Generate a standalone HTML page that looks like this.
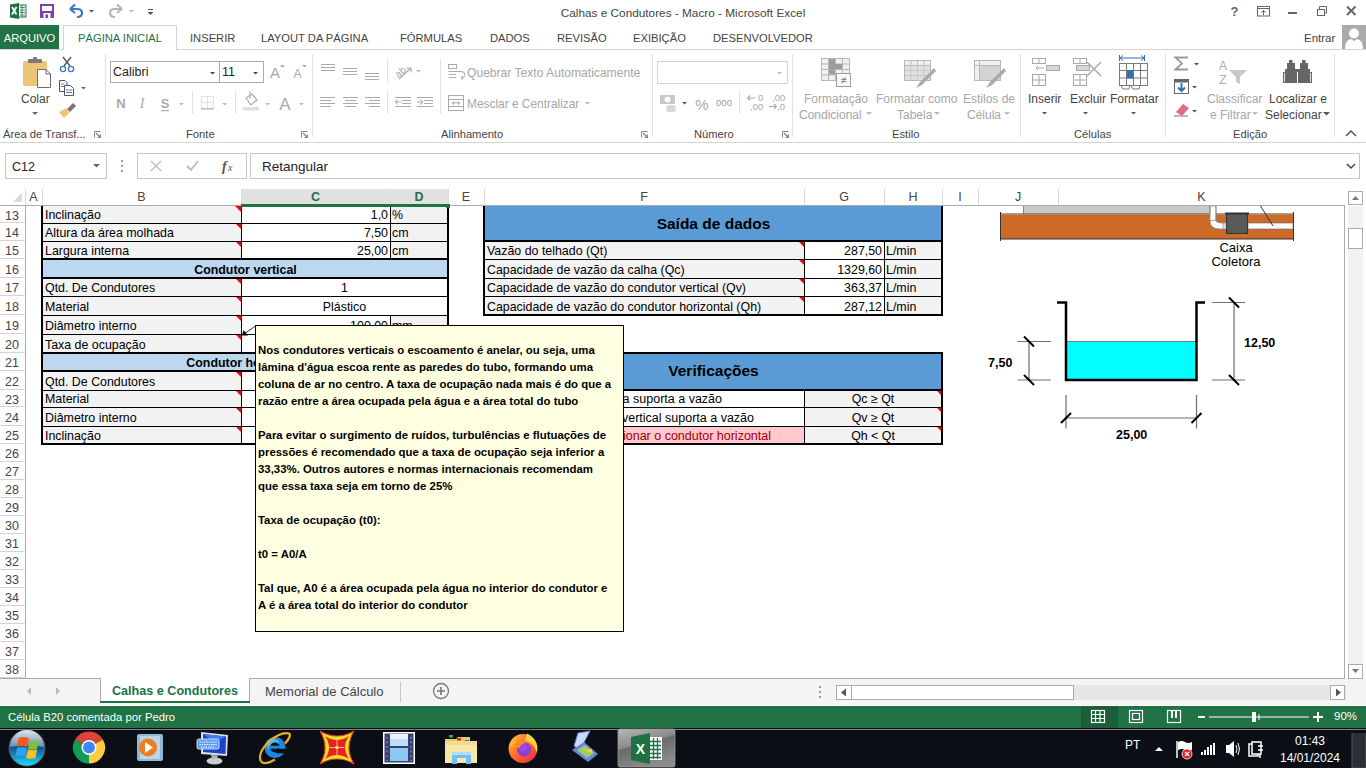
<!DOCTYPE html><html><head><meta charset="utf-8"><style>
*{margin:0;padding:0}
html,body{width:1366px;height:768px;overflow:hidden;background:#fff;font-family:"Liberation Sans",sans-serif;position:relative}
.a{position:absolute}
.t{white-space:nowrap}
</style></head><body>
<div class="a" style="left:0px;top:0px;width:1366px;height:25px;background:#fff"></div>
<div class="a t" style="left:0px;top:5px;width:1366px;text-align:center;font-size:11.8px;color:#444;line-height:16px">Calhas e Condutores - Macro - Microsoft Excel</div>
<div class="a" style="left:0px;top:25px;width:59px;height:25px;background:#217346"></div>
<div class="a t" style="left:0px;top:31px;width:59px;text-align:center;color:#fff;font-size:11.2px;line-height:15px">ARQUIVO</div>
<div class="a" style="left:63px;top:25px;width:112px;height:25px;border:1px solid #d4d4d4;border-bottom:none;background:#fff"></div>
<div class="a t" style="left:63px;top:31px;width:114px;text-align:center;color:#217346;font-size:11.2px;line-height:15px">PÁGINA INICIAL</div>
<div class="a t" style="left:190px;top:31px;color:#444;font-size:11.2px;line-height:15px">INSERIR</div>
<div class="a t" style="left:261px;top:31px;color:#444;font-size:11.2px;line-height:15px">LAYOUT DA PÁGINA</div>
<div class="a t" style="left:400px;top:31px;color:#444;font-size:11.2px;line-height:15px">FÓRMULAS</div>
<div class="a t" style="left:490px;top:31px;color:#444;font-size:11.2px;line-height:15px">DADOS</div>
<div class="a t" style="left:557px;top:31px;color:#444;font-size:11.2px;line-height:15px">REVISÃO</div>
<div class="a t" style="left:633px;top:31px;color:#444;font-size:11.2px;line-height:15px">EXIBIÇÃO</div>
<div class="a t" style="left:713px;top:31px;color:#444;font-size:11.2px;line-height:15px">DESENVOLVEDOR</div>
<div class="a t" style="left:1304px;top:31px;color:#444;font-size:11.5px;line-height:15px">Entrar</div>
<div class="a" style="left:0px;top:50px;width:1366px;height:92px;background:#fff;border-bottom:1px solid #d4d4d4"></div>
<div class="a" style="left:105px;top:54px;width:1px;height:83px;background:#e1e1e1"></div>
<div class="a" style="left:312px;top:54px;width:1px;height:83px;background:#e1e1e1"></div>
<div class="a" style="left:652px;top:54px;width:1px;height:83px;background:#e1e1e1"></div>
<div class="a" style="left:792px;top:54px;width:1px;height:83px;background:#e1e1e1"></div>
<div class="a" style="left:1020px;top:54px;width:1px;height:83px;background:#e1e1e1"></div>
<div class="a" style="left:1165px;top:54px;width:1px;height:83px;background:#e1e1e1"></div>
<div class="a" style="left:1334px;top:54px;width:1px;height:83px;background:#e1e1e1"></div>
<div class="a t" style="left:3px;top:127px;color:#444;font-size:11.2px;line-height:14px">Área de Transf...</div>
<div class="a t" style="left:186px;top:127px;color:#444;font-size:11.2px;line-height:14px">Fonte</div>
<div class="a t" style="left:441px;top:127px;color:#444;font-size:11.2px;line-height:14px">Alinhamento</div>
<div class="a t" style="left:694px;top:127px;color:#444;font-size:11.2px;line-height:14px">Número</div>
<div class="a t" style="left:892px;top:127px;color:#444;font-size:11.2px;line-height:14px">Estilo</div>
<div class="a t" style="left:1074px;top:127px;color:#444;font-size:11.2px;line-height:14px">Células</div>
<div class="a t" style="left:1233px;top:127px;color:#444;font-size:11.2px;line-height:14px">Edição</div>
<div class="a" style="left:0px;top:144px;width:1366px;height:45px;background:#fff"></div>
<div class="a" style="left:5px;top:153px;width:100px;height:24px;border:1px solid #c6c6c6;background:#fff"></div>
<div class="a t" style="left:12px;top:160px;color:#222;font-size:12.5px;line-height:14px">C12</div>
<div class="a" style="left:137px;top:153px;width:108px;height:24px;border:1px solid #c6c6c6;background:#fff"></div>
<div class="a" style="left:250px;top:153px;width:1108px;height:24px;border:1px solid #c6c6c6;background:#fff"></div>
<div class="a t" style="left:262px;top:160px;color:#222;font-size:13.5px;line-height:14px">Retangular</div>
<div class="a" style="left:0px;top:189px;width:1345px;height:17px;background:#fff;border-bottom:1px solid #ababab"></div>
<div class="a" style="left:0px;top:189px;width:25px;height:16px;background:#fff"></div>
<div class="a" style="left:25px;top:189px;width:17px;height:16px;background:#fff"></div>
<div class="a t" style="left:25px;top:190px;width:17px;text-align:center;color:#444;font-size:12.5px;line-height:15px">A</div>
<div class="a" style="left:42px;top:189px;width:199px;height:16px;background:#fff"></div>
<div class="a t" style="left:42px;top:190px;width:199px;text-align:center;color:#444;font-size:12.5px;line-height:15px">B</div>
<div class="a" style="left:241px;top:189px;width:149px;height:16px;background:#e1e1e1"></div>
<div class="a t" style="left:241px;top:190px;width:149px;text-align:center;color:#217346;font-weight:bold;font-size:12.5px;line-height:15px">C</div>
<div class="a" style="left:390px;top:189px;width:58px;height:16px;background:#e1e1e1"></div>
<div class="a t" style="left:390px;top:190px;width:58px;text-align:center;color:#217346;font-weight:bold;font-size:12.5px;line-height:15px">D</div>
<div class="a" style="left:448px;top:189px;width:36px;height:16px;background:#fff"></div>
<div class="a t" style="left:448px;top:190px;width:36px;text-align:center;color:#444;font-size:12.5px;line-height:15px">E</div>
<div class="a" style="left:484px;top:189px;width:320px;height:16px;background:#fff"></div>
<div class="a t" style="left:484px;top:190px;width:320px;text-align:center;color:#444;font-size:12.5px;line-height:15px">F</div>
<div class="a" style="left:804px;top:189px;width:80px;height:16px;background:#fff"></div>
<div class="a t" style="left:804px;top:190px;width:80px;text-align:center;color:#444;font-size:12.5px;line-height:15px">G</div>
<div class="a" style="left:884px;top:189px;width:58px;height:16px;background:#fff"></div>
<div class="a t" style="left:884px;top:190px;width:58px;text-align:center;color:#444;font-size:12.5px;line-height:15px">H</div>
<div class="a" style="left:942px;top:189px;width:36px;height:16px;background:#fff"></div>
<div class="a t" style="left:942px;top:190px;width:36px;text-align:center;color:#444;font-size:12.5px;line-height:15px">I</div>
<div class="a" style="left:978px;top:189px;width:80px;height:16px;background:#fff"></div>
<div class="a t" style="left:978px;top:190px;width:80px;text-align:center;color:#444;font-size:12.5px;line-height:15px">J</div>
<div class="a" style="left:1058px;top:189px;width:287px;height:16px;background:#fff"></div>
<div class="a t" style="left:1058px;top:190px;width:287px;text-align:center;color:#444;font-size:12.5px;line-height:15px">K</div>
<div class="a" style="left:25px;top:189px;width:1px;height:16px;background:#dadada"></div>
<div class="a" style="left:42px;top:189px;width:1px;height:16px;background:#dadada"></div>
<div class="a" style="left:241px;top:189px;width:1px;height:16px;background:#dadada"></div>
<div class="a" style="left:390px;top:189px;width:1px;height:16px;background:#dadada"></div>
<div class="a" style="left:448px;top:189px;width:1px;height:16px;background:#dadada"></div>
<div class="a" style="left:484px;top:189px;width:1px;height:16px;background:#dadada"></div>
<div class="a" style="left:804px;top:189px;width:1px;height:16px;background:#dadada"></div>
<div class="a" style="left:884px;top:189px;width:1px;height:16px;background:#dadada"></div>
<div class="a" style="left:942px;top:189px;width:1px;height:16px;background:#dadada"></div>
<div class="a" style="left:978px;top:189px;width:1px;height:16px;background:#dadada"></div>
<div class="a" style="left:1058px;top:189px;width:1px;height:16px;background:#dadada"></div>
<div class="a" style="left:0px;top:205px;width:1345px;height:1px;background:#ababab"></div>
<div class="a" style="left:0px;top:206px;width:1345px;height:472px;background:#fff"></div>
<div class="a" style="left:0px;top:206px;width:26px;height:17px;border-right:1px solid #ababab;border-bottom:1px solid #d4d4d4;box-sizing:border-box;background:#fff"></div>
<div class="a t" style="left:0px;top:208px;width:24px;text-align:center;color:#444;font-size:12.5px;line-height:16px">13</div>
<div class="a" style="left:0px;top:223px;width:26px;height:18px;border-right:1px solid #ababab;border-bottom:1px solid #d4d4d4;box-sizing:border-box;background:#fff"></div>
<div class="a t" style="left:0px;top:225px;width:24px;text-align:center;color:#444;font-size:12.5px;line-height:17px">14</div>
<div class="a" style="left:0px;top:241px;width:26px;height:18px;border-right:1px solid #ababab;border-bottom:1px solid #d4d4d4;box-sizing:border-box;background:#fff"></div>
<div class="a t" style="left:0px;top:243px;width:24px;text-align:center;color:#444;font-size:12.5px;line-height:17px">15</div>
<div class="a" style="left:0px;top:259px;width:26px;height:19px;border-right:1px solid #ababab;border-bottom:1px solid #d4d4d4;box-sizing:border-box;background:#fff"></div>
<div class="a t" style="left:0px;top:261px;width:24px;text-align:center;color:#444;font-size:12.5px;line-height:18px">16</div>
<div class="a" style="left:0px;top:278px;width:26px;height:18px;border-right:1px solid #ababab;border-bottom:1px solid #d4d4d4;box-sizing:border-box;background:#fff"></div>
<div class="a t" style="left:0px;top:280px;width:24px;text-align:center;color:#444;font-size:12.5px;line-height:17px">17</div>
<div class="a" style="left:0px;top:296px;width:26px;height:19px;border-right:1px solid #ababab;border-bottom:1px solid #d4d4d4;box-sizing:border-box;background:#fff"></div>
<div class="a t" style="left:0px;top:298px;width:24px;text-align:center;color:#444;font-size:12.5px;line-height:18px">18</div>
<div class="a" style="left:0px;top:315px;width:26px;height:19px;border-right:1px solid #ababab;border-bottom:1px solid #d4d4d4;box-sizing:border-box;background:#fff"></div>
<div class="a t" style="left:0px;top:317px;width:24px;text-align:center;color:#444;font-size:12.5px;line-height:18px">19</div>
<div class="a" style="left:0px;top:334px;width:26px;height:19px;border-right:1px solid #ababab;border-bottom:1px solid #d4d4d4;box-sizing:border-box;background:#fff"></div>
<div class="a t" style="left:0px;top:336px;width:24px;text-align:center;color:#444;font-size:12.5px;line-height:18px">20</div>
<div class="a" style="left:0px;top:353px;width:26px;height:18px;border-right:1px solid #ababab;border-bottom:1px solid #d4d4d4;box-sizing:border-box;background:#fff"></div>
<div class="a t" style="left:0px;top:355px;width:24px;text-align:center;color:#444;font-size:12.5px;line-height:17px">21</div>
<div class="a" style="left:0px;top:371px;width:26px;height:19px;border-right:1px solid #ababab;border-bottom:1px solid #d4d4d4;box-sizing:border-box;background:#fff"></div>
<div class="a t" style="left:0px;top:373px;width:24px;text-align:center;color:#444;font-size:12.5px;line-height:18px">22</div>
<div class="a" style="left:0px;top:390px;width:26px;height:17px;border-right:1px solid #ababab;border-bottom:1px solid #d4d4d4;box-sizing:border-box;background:#fff"></div>
<div class="a t" style="left:0px;top:392px;width:24px;text-align:center;color:#444;font-size:12.5px;line-height:16px">23</div>
<div class="a" style="left:0px;top:407px;width:26px;height:19px;border-right:1px solid #ababab;border-bottom:1px solid #d4d4d4;box-sizing:border-box;background:#fff"></div>
<div class="a t" style="left:0px;top:409px;width:24px;text-align:center;color:#444;font-size:12.5px;line-height:18px">24</div>
<div class="a" style="left:0px;top:426px;width:26px;height:18px;border-right:1px solid #ababab;border-bottom:1px solid #d4d4d4;box-sizing:border-box;background:#fff"></div>
<div class="a t" style="left:0px;top:428px;width:24px;text-align:center;color:#444;font-size:12.5px;line-height:17px">25</div>
<div class="a" style="left:0px;top:444px;width:26px;height:18px;border-right:1px solid #ababab;border-bottom:1px solid #d4d4d4;box-sizing:border-box;background:#fff"></div>
<div class="a t" style="left:0px;top:446px;width:24px;text-align:center;color:#444;font-size:12.5px;line-height:17px">26</div>
<div class="a" style="left:0px;top:462px;width:26px;height:18px;border-right:1px solid #ababab;border-bottom:1px solid #d4d4d4;box-sizing:border-box;background:#fff"></div>
<div class="a t" style="left:0px;top:464px;width:24px;text-align:center;color:#444;font-size:12.5px;line-height:17px">27</div>
<div class="a" style="left:0px;top:480px;width:26px;height:18px;border-right:1px solid #ababab;border-bottom:1px solid #d4d4d4;box-sizing:border-box;background:#fff"></div>
<div class="a t" style="left:0px;top:482px;width:24px;text-align:center;color:#444;font-size:12.5px;line-height:17px">28</div>
<div class="a" style="left:0px;top:498px;width:26px;height:18px;border-right:1px solid #ababab;border-bottom:1px solid #d4d4d4;box-sizing:border-box;background:#fff"></div>
<div class="a t" style="left:0px;top:500px;width:24px;text-align:center;color:#444;font-size:12.5px;line-height:17px">29</div>
<div class="a" style="left:0px;top:516px;width:26px;height:18px;border-right:1px solid #ababab;border-bottom:1px solid #d4d4d4;box-sizing:border-box;background:#fff"></div>
<div class="a t" style="left:0px;top:518px;width:24px;text-align:center;color:#444;font-size:12.5px;line-height:17px">30</div>
<div class="a" style="left:0px;top:534px;width:26px;height:18px;border-right:1px solid #ababab;border-bottom:1px solid #d4d4d4;box-sizing:border-box;background:#fff"></div>
<div class="a t" style="left:0px;top:536px;width:24px;text-align:center;color:#444;font-size:12.5px;line-height:17px">31</div>
<div class="a" style="left:0px;top:552px;width:26px;height:18px;border-right:1px solid #ababab;border-bottom:1px solid #d4d4d4;box-sizing:border-box;background:#fff"></div>
<div class="a t" style="left:0px;top:554px;width:24px;text-align:center;color:#444;font-size:12.5px;line-height:17px">32</div>
<div class="a" style="left:0px;top:570px;width:26px;height:18px;border-right:1px solid #ababab;border-bottom:1px solid #d4d4d4;box-sizing:border-box;background:#fff"></div>
<div class="a t" style="left:0px;top:572px;width:24px;text-align:center;color:#444;font-size:12.5px;line-height:17px">33</div>
<div class="a" style="left:0px;top:588px;width:26px;height:18px;border-right:1px solid #ababab;border-bottom:1px solid #d4d4d4;box-sizing:border-box;background:#fff"></div>
<div class="a t" style="left:0px;top:590px;width:24px;text-align:center;color:#444;font-size:12.5px;line-height:17px">34</div>
<div class="a" style="left:0px;top:606px;width:26px;height:18px;border-right:1px solid #ababab;border-bottom:1px solid #d4d4d4;box-sizing:border-box;background:#fff"></div>
<div class="a t" style="left:0px;top:608px;width:24px;text-align:center;color:#444;font-size:12.5px;line-height:17px">35</div>
<div class="a" style="left:0px;top:624px;width:26px;height:18px;border-right:1px solid #ababab;border-bottom:1px solid #d4d4d4;box-sizing:border-box;background:#fff"></div>
<div class="a t" style="left:0px;top:626px;width:24px;text-align:center;color:#444;font-size:12.5px;line-height:17px">36</div>
<div class="a" style="left:0px;top:642px;width:26px;height:18px;border-right:1px solid #ababab;border-bottom:1px solid #d4d4d4;box-sizing:border-box;background:#fff"></div>
<div class="a t" style="left:0px;top:644px;width:24px;text-align:center;color:#444;font-size:12.5px;line-height:17px">37</div>
<div class="a" style="left:0px;top:660px;width:26px;height:18px;border-right:1px solid #ababab;border-bottom:1px solid #d4d4d4;box-sizing:border-box;background:#fff"></div>
<div class="a t" style="left:0px;top:662px;width:24px;text-align:center;color:#444;font-size:12.5px;line-height:17px">38</div>
<div class="a" style="left:1344px;top:205px;width:1px;height:474px;background:#ababab"></div>
<div class="a" style="left:43px;top:206px;width:198px;height:17px;background:#f2f2f2"></div>
<div class="a" style="left:43px;top:223px;width:198px;height:18px;background:#f2f2f2"></div>
<div class="a" style="left:43px;top:241px;width:198px;height:18px;background:#f2f2f2"></div>
<div class="a" style="left:43px;top:278px;width:198px;height:18px;background:#f2f2f2"></div>
<div class="a" style="left:43px;top:296px;width:198px;height:19px;background:#f2f2f2"></div>
<div class="a" style="left:43px;top:315px;width:198px;height:19px;background:#f2f2f2"></div>
<div class="a" style="left:43px;top:334px;width:198px;height:19px;background:#f2f2f2"></div>
<div class="a" style="left:43px;top:371px;width:198px;height:19px;background:#f2f2f2"></div>
<div class="a" style="left:43px;top:390px;width:198px;height:17px;background:#f2f2f2"></div>
<div class="a" style="left:43px;top:407px;width:198px;height:19px;background:#f2f2f2"></div>
<div class="a" style="left:43px;top:426px;width:198px;height:18px;background:#f2f2f2"></div>
<div class="a" style="left:241px;top:206px;width:149px;height:17px;background:#fff"></div>
<div class="a" style="left:390px;top:206px;width:58px;height:17px;background:#f2f2f2"></div>
<div class="a" style="left:241px;top:223px;width:149px;height:18px;background:#fff"></div>
<div class="a" style="left:390px;top:223px;width:58px;height:18px;background:#f2f2f2"></div>
<div class="a" style="left:241px;top:241px;width:149px;height:18px;background:#fff"></div>
<div class="a" style="left:390px;top:241px;width:58px;height:18px;background:#f2f2f2"></div>
<div class="a" style="left:241px;top:315px;width:149px;height:19px;background:#fff"></div>
<div class="a" style="left:390px;top:315px;width:58px;height:19px;background:#f2f2f2"></div>
<div class="a" style="left:241px;top:334px;width:149px;height:19px;background:#fff"></div>
<div class="a" style="left:390px;top:334px;width:58px;height:19px;background:#f2f2f2"></div>
<div class="a" style="left:241px;top:278px;width:207px;height:18px;background:#fff"></div>
<div class="a" style="left:241px;top:296px;width:207px;height:19px;background:#fff"></div>
<div class="a" style="left:241px;top:371px;width:207px;height:19px;background:#fff"></div>
<div class="a" style="left:241px;top:390px;width:207px;height:17px;background:#fff"></div>
<div class="a" style="left:241px;top:407px;width:149px;height:19px;background:#fff"></div>
<div class="a" style="left:390px;top:407px;width:58px;height:19px;background:#f2f2f2"></div>
<div class="a" style="left:241px;top:426px;width:149px;height:18px;background:#fff"></div>
<div class="a" style="left:390px;top:426px;width:58px;height:18px;background:#f2f2f2"></div>
<div class="a" style="left:43px;top:259px;width:405px;height:19px;background:#bdd7ee"></div>
<div class="a" style="left:43px;top:353px;width:405px;height:18px;background:#bdd7ee"></div>
<div class="a t" style="left:45px;top:208px;font-size:12.4px;line-height:14px;color:#000;">Inclinação</div>
<div class="a" style="left:235px;top:206px;width:0;height:0;border-left:6px solid transparent;border-top:6px solid #f00"></div>
<div class="a t" style="left:45px;top:226px;font-size:12.4px;line-height:14px;color:#000;">Altura da área molhada</div>
<div class="a" style="left:235px;top:223px;width:0;height:0;border-left:6px solid transparent;border-top:6px solid #f00"></div>
<div class="a t" style="left:45px;top:244px;font-size:12.4px;line-height:14px;color:#000;">Largura interna</div>
<div class="a" style="left:235px;top:241px;width:0;height:0;border-left:6px solid transparent;border-top:6px solid #f00"></div>
<div class="a t" style="left:45px;top:281px;font-size:12.4px;line-height:14px;color:#000;">Qtd. De Condutores</div>
<div class="a" style="left:235px;top:278px;width:0;height:0;border-left:6px solid transparent;border-top:6px solid #f00"></div>
<div class="a t" style="left:45px;top:300px;font-size:12.4px;line-height:14px;color:#000;">Material</div>
<div class="a" style="left:235px;top:296px;width:0;height:0;border-left:6px solid transparent;border-top:6px solid #f00"></div>
<div class="a t" style="left:45px;top:319px;font-size:12.4px;line-height:14px;color:#000;">Diâmetro interno</div>
<div class="a" style="left:235px;top:315px;width:0;height:0;border-left:6px solid transparent;border-top:6px solid #f00"></div>
<div class="a t" style="left:45px;top:338px;font-size:12.4px;line-height:14px;color:#000;">Taxa de ocupação</div>
<div class="a" style="left:235px;top:334px;width:0;height:0;border-left:6px solid transparent;border-top:6px solid #f00"></div>
<div class="a t" style="left:45px;top:375px;font-size:12.4px;line-height:14px;color:#000;">Qtd. De Condutores</div>
<div class="a" style="left:235px;top:371px;width:0;height:0;border-left:6px solid transparent;border-top:6px solid #f00"></div>
<div class="a t" style="left:45px;top:392px;font-size:12.4px;line-height:14px;color:#000;">Material</div>
<div class="a" style="left:235px;top:390px;width:0;height:0;border-left:6px solid transparent;border-top:6px solid #f00"></div>
<div class="a t" style="left:45px;top:411px;font-size:12.4px;line-height:14px;color:#000;">Diâmetro interno</div>
<div class="a" style="left:235px;top:407px;width:0;height:0;border-left:6px solid transparent;border-top:6px solid #f00"></div>
<div class="a t" style="left:45px;top:429px;font-size:12.4px;line-height:14px;color:#000;">Inclinação</div>
<div class="a" style="left:235px;top:426px;width:0;height:0;border-left:6px solid transparent;border-top:6px solid #f00"></div>
<div class="a t" style="left:241px;top:208px;width:147px;text-align:right;font-size:12.4px;line-height:14px;color:#000;">1,0</div>
<div class="a t" style="left:392px;top:208px;font-size:12.4px;line-height:14px;color:#000;">%</div>
<div class="a t" style="left:241px;top:226px;width:147px;text-align:right;font-size:12.4px;line-height:14px;color:#000;">7,50</div>
<div class="a t" style="left:392px;top:226px;font-size:12.4px;line-height:14px;color:#000;">cm</div>
<div class="a t" style="left:241px;top:244px;width:147px;text-align:right;font-size:12.4px;line-height:14px;color:#000;">25,00</div>
<div class="a t" style="left:392px;top:244px;font-size:12.4px;line-height:14px;color:#000;">cm</div>
<div class="a t" style="left:241px;top:281px;width:207px;text-align:center;font-size:12.4px;line-height:14px;color:#000;">1</div>
<div class="a t" style="left:241px;top:300px;width:207px;text-align:center;font-size:12.4px;line-height:14px;color:#000;">Plástico</div>
<div class="a t" style="left:241px;top:319px;width:147px;text-align:right;font-size:12.4px;line-height:14px;color:#000;">100,00</div>
<div class="a t" style="left:392px;top:319px;font-size:12.4px;line-height:14px;color:#000;">mm</div>
<div class="a t" style="left:43px;top:263px;width:405px;text-align:center;font-size:12.4px;line-height:14px;color:#000;font-weight:bold">Condutor vertical</div>
<div class="a t" style="left:43px;top:356px;width:405px;text-align:center;font-size:12.4px;line-height:14px;color:#000;font-weight:bold">Condutor horizontal</div>
<div class="a" style="left:43px;top:223px;width:405px;height:1px;background:#000"></div>
<div class="a" style="left:43px;top:241px;width:405px;height:1px;background:#000"></div>
<div class="a" style="left:43px;top:259px;width:405px;height:1px;background:#000"></div>
<div class="a" style="left:43px;top:278px;width:405px;height:1px;background:#000"></div>
<div class="a" style="left:43px;top:296px;width:405px;height:1px;background:#000"></div>
<div class="a" style="left:43px;top:315px;width:405px;height:1px;background:#000"></div>
<div class="a" style="left:43px;top:334px;width:405px;height:1px;background:#000"></div>
<div class="a" style="left:43px;top:353px;width:405px;height:1px;background:#000"></div>
<div class="a" style="left:43px;top:371px;width:405px;height:1px;background:#000"></div>
<div class="a" style="left:43px;top:390px;width:405px;height:1px;background:#000"></div>
<div class="a" style="left:43px;top:407px;width:405px;height:1px;background:#000"></div>
<div class="a" style="left:43px;top:426px;width:405px;height:1px;background:#000"></div>
<div class="a" style="left:41px;top:258px;width:408px;height:2px;background:#000"></div>
<div class="a" style="left:41px;top:277px;width:408px;height:2px;background:#000"></div>
<div class="a" style="left:41px;top:352px;width:408px;height:2px;background:#000"></div>
<div class="a" style="left:41px;top:370px;width:408px;height:2px;background:#000"></div>
<div class="a" style="left:41px;top:443px;width:408px;height:2px;background:#000"></div>
<div class="a" style="left:41px;top:206px;width:2px;height:238px;background:#000"></div>
<div class="a" style="left:447px;top:206px;width:2px;height:238px;background:#000"></div>
<div class="a" style="left:241px;top:206px;width:1px;height:53px;background:#000"></div>
<div class="a" style="left:241px;top:278px;width:1px;height:75px;background:#000"></div>
<div class="a" style="left:241px;top:371px;width:1px;height:73px;background:#000"></div>
<div class="a" style="left:390px;top:206px;width:1px;height:53px;background:#000"></div>
<div class="a" style="left:390px;top:315px;width:1px;height:38px;background:#000"></div>
<div class="a" style="left:390px;top:407px;width:1px;height:37px;background:#000"></div>
<div class="a" style="left:485px;top:206px;width:457px;height:35px;background:#5b9bd5"></div>
<div class="a t" style="left:485px;top:215px;width:457px;text-align:center;font-weight:bold;font-size:15.5px;line-height:18px;color:#000">Saída de dados</div>
<div class="a" style="left:485px;top:241px;width:319px;height:18px;background:#f2f2f2"></div>
<div class="a" style="left:804px;top:241px;width:80px;height:18px;background:#fff"></div>
<div class="a" style="left:884px;top:241px;width:58px;height:18px;background:#f2f2f2"></div>
<div class="a t" style="left:487px;top:244px;font-size:12.4px;line-height:14px;color:#000;">Vazão do telhado (Qt)</div>
<div class="a t" style="left:804px;top:244px;width:78px;text-align:right;font-size:12.4px;line-height:14px;color:#000;">287,50</div>
<div class="a t" style="left:886px;top:244px;font-size:12.4px;line-height:14px;color:#000;">L/min</div>
<div class="a" style="left:798px;top:241px;width:0;height:0;border-left:6px solid transparent;border-top:6px solid #f00"></div>
<div class="a" style="left:485px;top:259px;width:319px;height:19px;background:#f2f2f2"></div>
<div class="a" style="left:804px;top:259px;width:80px;height:19px;background:#fff"></div>
<div class="a" style="left:884px;top:259px;width:58px;height:19px;background:#f2f2f2"></div>
<div class="a t" style="left:487px;top:263px;font-size:12.4px;line-height:14px;color:#000;">Capacidade de vazão da calha (Qc)</div>
<div class="a t" style="left:804px;top:263px;width:78px;text-align:right;font-size:12.4px;line-height:14px;color:#000;">1329,60</div>
<div class="a t" style="left:886px;top:263px;font-size:12.4px;line-height:14px;color:#000;">L/min</div>
<div class="a" style="left:798px;top:259px;width:0;height:0;border-left:6px solid transparent;border-top:6px solid #f00"></div>
<div class="a" style="left:485px;top:278px;width:319px;height:18px;background:#f2f2f2"></div>
<div class="a" style="left:804px;top:278px;width:80px;height:18px;background:#fff"></div>
<div class="a" style="left:884px;top:278px;width:58px;height:18px;background:#f2f2f2"></div>
<div class="a t" style="left:487px;top:281px;font-size:12.4px;line-height:14px;color:#000;">Capacidade de vazão do condutor vertical (Qv)</div>
<div class="a t" style="left:804px;top:281px;width:78px;text-align:right;font-size:12.4px;line-height:14px;color:#000;">363,37</div>
<div class="a t" style="left:886px;top:281px;font-size:12.4px;line-height:14px;color:#000;">L/min</div>
<div class="a" style="left:798px;top:278px;width:0;height:0;border-left:6px solid transparent;border-top:6px solid #f00"></div>
<div class="a" style="left:485px;top:296px;width:319px;height:19px;background:#f2f2f2"></div>
<div class="a" style="left:804px;top:296px;width:80px;height:19px;background:#fff"></div>
<div class="a" style="left:884px;top:296px;width:58px;height:19px;background:#f2f2f2"></div>
<div class="a t" style="left:487px;top:300px;font-size:12.4px;line-height:14px;color:#000;">Capacidade de vazão do condutor horizontal (Qh)</div>
<div class="a t" style="left:804px;top:300px;width:78px;text-align:right;font-size:12.4px;line-height:14px;color:#000;">287,12</div>
<div class="a t" style="left:886px;top:300px;font-size:12.4px;line-height:14px;color:#000;">L/min</div>
<div class="a" style="left:798px;top:296px;width:0;height:0;border-left:6px solid transparent;border-top:6px solid #f00"></div>
<div class="a" style="left:485px;top:259px;width:457px;height:1px;background:#000"></div>
<div class="a" style="left:485px;top:278px;width:457px;height:1px;background:#000"></div>
<div class="a" style="left:485px;top:296px;width:457px;height:1px;background:#000"></div>
<div class="a" style="left:483px;top:240px;width:460px;height:2px;background:#000"></div>
<div class="a" style="left:483px;top:314px;width:460px;height:2px;background:#000"></div>
<div class="a" style="left:483px;top:206px;width:2px;height:110px;background:#000"></div>
<div class="a" style="left:941px;top:206px;width:2px;height:110px;background:#000"></div>
<div class="a" style="left:804px;top:241px;width:1px;height:74px;background:#000"></div>
<div class="a" style="left:884px;top:241px;width:1px;height:74px;background:#000"></div>
<div class="a" style="left:485px;top:353px;width:457px;height:37px;background:#5b9bd5"></div>
<div class="a t" style="left:485px;top:362px;width:457px;text-align:center;font-weight:bold;font-size:15.5px;line-height:18px;color:#000">Verificações</div>
<div class="a" style="left:485px;top:390px;width:319px;height:17px;background:#fff"></div>
<div class="a" style="left:804px;top:390px;width:138px;height:17px;background:#f2f2f2"></div>
<div class="a t" style="left:804px;top:392px;width:138px;text-align:center;font-size:12.4px;line-height:14px;color:#000;">Qc ≥ Qt</div>
<div class="a" style="left:936px;top:390px;width:0;height:0;border-left:6px solid transparent;border-top:6px solid #f00"></div>
<div class="a" style="left:485px;top:407px;width:319px;height:19px;background:#fff"></div>
<div class="a" style="left:804px;top:407px;width:138px;height:19px;background:#f2f2f2"></div>
<div class="a t" style="left:804px;top:411px;width:138px;text-align:center;font-size:12.4px;line-height:14px;color:#000;">Qv ≥ Qt</div>
<div class="a" style="left:936px;top:407px;width:0;height:0;border-left:6px solid transparent;border-top:6px solid #f00"></div>
<div class="a" style="left:485px;top:426px;width:319px;height:18px;background:#ffc7ce"></div>
<div class="a" style="left:804px;top:426px;width:138px;height:18px;background:#f2f2f2"></div>
<div class="a t" style="left:804px;top:429px;width:138px;text-align:center;font-size:12.4px;line-height:14px;color:#000;">Qh &lt; Qt</div>
<div class="a" style="left:936px;top:426px;width:0;height:0;border-left:6px solid transparent;border-top:6px solid #f00"></div>
<div class="a" style="left:485px;top:407px;width:457px;height:1px;background:#000"></div>
<div class="a" style="left:485px;top:426px;width:457px;height:1px;background:#000"></div>
<div class="a" style="left:483px;top:352px;width:460px;height:2px;background:#000"></div>
<div class="a" style="left:483px;top:389px;width:460px;height:2px;background:#000"></div>
<div class="a" style="left:483px;top:443px;width:460px;height:2px;background:#000"></div>
<div class="a" style="left:483px;top:352px;width:2px;height:93px;background:#000"></div>
<div class="a" style="left:941px;top:352px;width:2px;height:93px;background:#000"></div>
<div class="a" style="left:804px;top:390px;width:1px;height:54px;background:#000"></div>
<div class="a" style="left:241px;top:204px;width:207px;height:3px;background:#217346"></div>
<div class="a" style="left:446px;top:204px;width:4px;height:4px;background:#217346"></div>
<svg class="a" style="left:238px;top:322px" width="20" height="16"><line x1="17.5" y1="4" x2="6" y2="12" stroke="#333" stroke-width="1"/><path d="M4 13.5 L5.5 8 L8 11 L10 13.5 Z" fill="#000"/></svg>
<div class="a" style="left:255px;top:325px;width:367px;height:305px;background:#ffffe1;border:1px solid #000"></div>
<div class="a t" style="left:258px;top:342px;font-weight:bold;font-size:11.4px;line-height:17px;color:#000">Nos condutores verticais o escoamento é anelar, ou seja, uma</div>
<div class="a t" style="left:258px;top:359px;font-weight:bold;font-size:11.4px;line-height:17px;color:#000">lâmina d'água escoa rente as paredes do tubo, formando uma</div>
<div class="a t" style="left:258px;top:376px;font-weight:bold;font-size:11.4px;line-height:17px;color:#000">coluna de ar no centro. A taxa de ocupação nada mais é do que a</div>
<div class="a t" style="left:258px;top:393px;font-weight:bold;font-size:11.4px;line-height:17px;color:#000">razão entre a área ocupada pela água e a área total do tubo</div>
<div class="a t" style="left:258px;top:427px;font-weight:bold;font-size:11.4px;line-height:17px;color:#000">Para evitar o surgimento de ruídos, turbulências e flutuações de</div>
<div class="a t" style="left:258px;top:444px;font-weight:bold;font-size:11.4px;line-height:17px;color:#000">pressões é recomendado que a taxa de ocupação seja inferior a</div>
<div class="a t" style="left:258px;top:461px;font-weight:bold;font-size:11.4px;line-height:17px;color:#000">33,33%. Outros autores e normas internacionais recomendam</div>
<div class="a t" style="left:258px;top:478px;font-weight:bold;font-size:11.4px;line-height:17px;color:#000">que essa taxa seja em torno de 25%</div>
<div class="a t" style="left:258px;top:512px;font-weight:bold;font-size:11.4px;line-height:17px;color:#000">Taxa de ocupação (t0):</div>
<div class="a t" style="left:258px;top:546px;font-weight:bold;font-size:11.4px;line-height:17px;color:#000">t0 = A0/A</div>
<div class="a t" style="left:258px;top:580px;font-weight:bold;font-size:11.4px;line-height:17px;color:#000">Tal que, A0 é a área ocupada pela água no interior do condutor e</div>
<div class="a t" style="left:258px;top:597px;font-weight:bold;font-size:11.4px;line-height:17px;color:#000">A é a área total do interior do condutor</div>
<div class="a" style="left:623px;top:392px;width:181px;height:14px;overflow:hidden"><div class="a t" style="right:82px;top:0;font-size:12.5px;line-height:14px;color:#000">A calha suporta a vazão</div></div>
<div class="a" style="left:623px;top:411px;width:181px;height:14px;overflow:hidden"><div class="a t" style="right:50px;top:0;font-size:12.5px;line-height:14px;color:#000">O condutor vertical suporta a vazão</div></div>
<div class="a" style="left:623px;top:429px;width:181px;height:14px;overflow:hidden"><div class="a t" style="right:33px;top:0;font-size:12.5px;line-height:14px;color:#9c0006">Redimensionar o condutor horizontal</div></div>
<div class="a" style="left:1345px;top:189px;width:21px;height:492px;background:#fff"></div>
<div class="a" style="left:1348px;top:206px;width:15px;height:472px;background:#f2f2f2"></div>
<div class="a" style="left:1348px;top:191px;width:15px;height:14px;background:#fff;border:1px solid #ababab;box-sizing:border-box"></div>
<svg class="a" style="left:1348px;top:191px" width="15" height="14"><path d="M4 9 L7.5 5 L11 9 Z" fill="#777"/></svg>
<div class="a" style="left:1348px;top:228px;width:15px;height:21px;background:#fff;border:1px solid #ababab;box-sizing:border-box"></div>
<div class="a" style="left:1348px;top:664px;width:15px;height:15px;background:#fff;border:1px solid #ababab;box-sizing:border-box"></div>
<svg class="a" style="left:1348px;top:664px" width="15" height="14"><path d="M4 5 L7.5 9 L11 5 Z" fill="#777"/></svg>
<div class="a" style="left:0px;top:678px;width:1345px;height:1px;background:#ababab"></div>
<div class="a" style="left:0px;top:679px;width:1366px;height:27px;background:#f4f4f4"></div>
<svg class="a" style="left:20px;top:684px" width="50" height="14"><path d="M7 7 L11 3 L11 11 Z" fill="#bbb"/><path d="M40 7 L36 3 L36 11 Z" fill="#bbb"/></svg>
<div class="a" style="left:100px;top:678px;width:150px;height:25px;background:#fff;border-left:1px solid #ababab;border-right:1px solid #ababab;box-sizing:border-box"></div>
<div class="a" style="left:100px;top:701px;width:150px;height:2px;background:#217346"></div>
<div class="a t" style="left:100px;top:684px;width:150px;text-align:center;font-weight:bold;font-size:12.6px;line-height:15px;color:#217346">Calhas e Condutores</div>
<div class="a t" style="left:265px;top:684px;font-size:13px;line-height:15px;color:#444">Memorial de Cálculo</div>
<div class="a" style="left:400px;top:682px;width:1px;height:20px;background:#c6c6c6"></div>
<svg class="a" style="left:432px;top:682px" width="18" height="18"><circle cx="9" cy="9" r="7.5" fill="none" stroke="#777" stroke-width="1.3"/><path d="M9 5 V13 M5 9 H13" stroke="#777" stroke-width="1.6"/></svg>
<svg class="a" style="left:818px;top:685px" width="4" height="14"><rect x="1" y="1" width="2" height="2" fill="#999"/><rect x="1" y="6" width="2" height="2" fill="#999"/><rect x="1" y="11" width="2" height="2" fill="#999"/></svg>
<div class="a" style="left:836px;top:685px;width:510px;height:15px;background:#e6e6e6"></div>
<div class="a" style="left:836px;top:685px;width:16px;height:15px;background:#fff;border:1px solid #ababab;box-sizing:border-box"></div>
<svg class="a" style="left:836px;top:685px" width="16" height="15"><path d="M5 7.5 L10 3.5 L10 11.5 Z" fill="#555"/></svg>
<div class="a" style="left:851px;top:685px;width:223px;height:15px;background:#fff;border:1px solid #ababab;box-sizing:border-box"></div>
<div class="a" style="left:1330px;top:685px;width:15px;height:15px;background:#fff;border:1px solid #ababab;box-sizing:border-box"></div>
<svg class="a" style="left:1330px;top:685px" width="16" height="15"><path d="M11 7.5 L6 3.5 L6 11.5 Z" fill="#555"/></svg>
<div class="a" style="left:0px;top:705px;width:1366px;height:1px;background:#fff"></div>
<div class="a" style="left:0px;top:706px;width:1366px;height:22px;background:#217346"></div>
<div class="a t" style="left:8px;top:710px;font-size:11.3px;line-height:15px;color:#fff">Célula B20 comentada por Pedro</div>
<div class="a" style="left:1081px;top:706px;width:37px;height:22px;background:#1b5e39"></div>
<svg class="a" style="left:1090px;top:709px" width="100" height="16"><g fill="none" stroke="#fff" stroke-width="1.2"><rect x="1.5" y="1.5" width="13" height="12"/><path d="M1.5 5.5 H14.5 M1.5 9.5 H14.5 M5.5 1.5 V13.5 M10 1.5 V13.5"/><rect x="39.5" y="1.5" width="13" height="12"/><rect x="42.5" y="4.5" width="7" height="6"/><rect x="77.5" y="1.5" width="13" height="12"/></g><rect x="81" y="2" width="2" height="7" fill="#fff"/><rect x="85" y="2" width="2" height="7" fill="#fff"/></svg>
<svg class="a" style="left:1196px;top:709px" width="130" height="16"><path d="M2 8 H9" stroke="#fff" stroke-width="2"/><path d="M13 8 H113" stroke="#fff" stroke-width="1"/><rect x="56" y="3" width="4" height="10" fill="#fff"/><path d="M63 5 V11" stroke="#fff"/><path d="M117 8 H127 M122 3 V13" stroke="#fff" stroke-width="2"/></svg>
<div class="a t" style="left:1334px;top:709px;font-size:11.5px;line-height:15px;color:#fff">90%</div>
<div class="a" style="left:0px;top:728px;width:1366px;height:40px;background:#0b0f15"></div>
<div class="a" style="left:0px;top:729px;width:1366px;height:1px;background:#7f8489"></div>
<svg class="a" style="left:0;top:728px" width="700" height="40">
<defs>
<linearGradient id="orb2" x1="0" y1="0" x2="0" y2="1"><stop offset="0" stop-color="#1a4a7a"/><stop offset="0.5" stop-color="#0d5a9a"/><stop offset="1" stop-color="#20d8ff"/></linearGradient><linearGradient id="orbtop" x1="0" y1="0" x2="0" y2="1"><stop offset="0" stop-color="#dde6ee"/><stop offset="1" stop-color="#6f8fae"/></linearGradient>
<linearGradient id="xl" x1="0" y1="0" x2="0.4" y2="1"><stop offset="0" stop-color="#b8b8b8"/><stop offset="0.45" stop-color="#8c8c8c"/><stop offset="0.5" stop-color="#6a6a6a"/><stop offset="1" stop-color="#8a8a8a"/></linearGradient>
<linearGradient id="ff" x1="0" y1="0" x2="1" y2="1"><stop offset="0" stop-color="#ffbd3a"/><stop offset="0.6" stop-color="#ff5a2a"/><stop offset="1" stop-color="#e0245e"/></linearGradient>
</defs>
<circle cx="27" cy="20" r="18.5" fill="#5a5a5a"/><circle cx="27" cy="20" r="17.5" fill="url(#orb2)"/>
<path d="M10 19 Q27 15 44 19 A17 17 0 0 0 10 19 Z" fill="url(#orbtop)"/>
<path d="M18.5 10 Q23 8 29 10 L27.5 19 Q22 17 17 19 Z" fill="#f05a20"/>
<path d="M29.5 12 Q34 14 39 12 L37 21 Q32 22.5 28 21 Z" fill="#80c040"/>
<path d="M17 20 Q21 18.5 27 20 L25.5 28.5 Q20 27 15.5 28.5 Z" fill="#30a0f0"/>
<path d="M28 21.5 Q32 23 37 21.5 L35.5 30 Q30 31.5 26 30 Z" fill="#ffc020"/>
<g transform="translate(89,19.5)">
<path d="M0 0 L13.86 -8 A16 16 0 0 0 -13.86 -8 Z" fill="#db4437"/>
<path d="M0 0 L-13.86 -8 A16 16 0 0 0 0 16 Z" fill="#0f9d58"/>
<path d="M0 0 L0 16 A16 16 0 0 0 13.86 -8 Z" fill="#ffcd40"/>
<circle r="7.5" fill="#fff"/><circle r="6" fill="#4285f4"/>
</g>
<rect x="137" y="6" width="26" height="27" rx="2" fill="#8fb7d9"/><rect x="140" y="8" width="20" height="23" fill="#b9d6ee"/>
<circle cx="148" cy="19.5" r="9" fill="#f07b1c"/><path d="M145 14 L153 19.5 L145 25 Z" fill="#fff"/>
<path d="M201 4 L228 7 L227 28 L201 26 Z" fill="#d8dde2"/><path d="M203 6 L226 8.5 L225.5 26 L203 24 Z" fill="#1f3fcf"/><path d="M203 6 L226 8.5 L214 14 Z" fill="#4a78f0"/>
<ellipse cx="214.5" cy="33" rx="8" ry="3.5" fill="#c8cccf"/><path d="M211 27 L218 27.5 L217 31 L212 31 Z" fill="#b0b4b8"/>
<rect x="197" y="11" width="22" height="10" rx="1.5" fill="#5aa0f0" stroke="#e8f0ff" stroke-width="0.8"/><path d="M199.5 14 H216.5 M199.5 16.5 H216.5 M201 19 H215" stroke="#fff" stroke-width="1.1" stroke-dasharray="1.4 0.9"/>
<g transform="translate(275,19.5)">
<circle r="10.5" fill="#1c8ae0"/><circle cx="-2" cy="-3" r="6" fill="#7cd0ff" opacity="0.6"/>
<circle r="5" fill="#0b0f15"/><rect x="-6" y="-1.8" width="12" height="3" fill="#1c8ae0"/><rect x="1" y="1.3" width="10" height="4.5" fill="#0b0f15"/>
<path d="M-14 14 Q-18 6 -6 -6 Q6 -16 14 -14 Q17 -12 10 -4" fill="none" stroke="#e9b020" stroke-width="2.2"/>
<path d="M-14 14 Q-10 18 0 12" fill="none" stroke="#e9b020" stroke-width="2.2"/>
</g>
<path d="M320 3 Q337 13 354 3 Q344 19.5 354 36 Q337 26 320 36 Q330 19.5 320 3 Z" fill="#f0e020" stroke="#e03030" stroke-width="1.2"/>
<path d="M325 8 Q337 16 349 8 Q341 19.5 349 31 Q337 23 325 31 Q333 19.5 325 8 Z" fill="#e82020"/>
<path d="M337 12 V27 M329.5 19.5 H344.5" stroke="#ffd0d0" stroke-width="0.8"/><rect x="335.5" y="18" width="3" height="3" fill="#ffe040"/>
<rect x="383" y="4" width="32" height="32" fill="#fff"/><rect x="384.5" y="5.5" width="29" height="29" fill="#3a4070"/>
<rect x="390" y="6" width="18" height="12" fill="#bfe0f8"/><rect x="390" y="20" width="18" height="13" fill="#8cc8f0"/><rect x="390" y="6" width="18" height="5" fill="#e8f4fc"/>
<path d="M387 9 V33 M411 9 V33" stroke="#7a7ae0" stroke-width="1.6" stroke-dasharray="1.6 3"/>
<path d="M445 11 H456 L458 9 H470 V14 H445 Z" fill="#e8c870"/>
<rect x="449" y="7" width="4" height="2.5" fill="#30b040"/><rect x="457" y="10" width="4" height="2.5" fill="#d03030"/><rect x="465" y="12" width="4" height="2.5" fill="#3080e0"/>
<path d="M445 13 H477 V35 H445 Z" fill="#f2dc90"/><path d="M445 17 H477 V35 H445 Z" fill="#f8e8a8"/>
<path d="M452 24 H471 V36 H466 V30 H457 V36 H452 Z" fill="#70c0f0"/><path d="M452 24 H471 V27 H452 Z" fill="#a8e0ff"/>
<g transform="translate(523,20.5)">
<circle r="14.5" fill="url(#ff)"/>
<path d="M4 -15 Q16 -9 14 4 Q10 -6 2 -8 Z" fill="#ffd040"/>
<path d="M-14 -2 Q-12 -10 -5 -12 Q-9 -6 -6 -2 Z" fill="#ffb030"/>
<circle cx="1" cy="1" r="7" fill="#8a3fd8"/><circle cx="0" cy="-1" r="4" fill="#a050f0" opacity="0.7"/>
<path d="M-10 -4 Q-4 -9 4 -6 Q-2 -5 -4 0 Z" fill="#ff8a20"/>
</g>
<path d="M578 5 L590 3 L580 22 L574 18 Z" fill="#c9d9ff" stroke="#6b7fc0" stroke-width="1"/>
<path d="M572 22 L584 14 L598 26 L588 34 Z" fill="#6b86d8"/><path d="M577 22 L585 17 L594 25 L587 30 Z" fill="#9ccf6a"/><path d="M584 22 L592 21 L592 25 Z" fill="#f0d040"/>
<rect x="618" y="1" width="57" height="38" rx="2" fill="url(#xl)" stroke="#9a9a9a" stroke-width="0.8"/>
<rect x="649" y="9" width="13" height="23" fill="#fff"/>
<path d="M650 13.5 H661 M650 17.5 H661 M650 21.5 H661 M650 25.5 H661 M650 29.5 H661 M653.5 10 V31 M657.5 10 V31" stroke="#1e7145" stroke-width="1.3"/>
<path d="M631 9 L650 5 V36 L631 32 Z" fill="#1e7145"/>
<text x="640.5" y="26" font-family="Liberation Sans" font-weight="bold" font-size="14" fill="#fff" text-anchor="middle">X</text>
</svg>
<div class="a t" style="left:1125px;top:738px;font-size:12px;line-height:15px;color:#fff">PT</div>
<svg class="a" style="left:1150px;top:733px" width="216" height="35">
<path d="M5 18 L9 14 L13 18 Z" fill="#fff"/>
<path d="M27 8 V25" stroke="#fff" stroke-width="1.5"/><path d="M28 9 Q32 7 35 9 Q38 11 42 9 V17 Q38 19 35 17 Q32 15 28 17 Z" fill="#fff"/>
<circle cx="37" cy="21" r="5" fill="#e02020" stroke="#fff" stroke-width="0.8"/><path d="M35 19 L39 23 M39 19 L35 23" stroke="#fff" stroke-width="1.3"/>
<rect x="51" y="19" width="2" height="3" fill="#fff"/><rect x="54" y="17" width="2" height="5" fill="#fff"/><rect x="57" y="14" width="2" height="8" fill="#fff"/><rect x="60" y="12" width="2" height="10" fill="#fff"/><rect x="63" y="10" width="2" height="12" fill="#fff"/>
<path d="M76 12 H79 L84 8 V24 L79 20 H76 Z" fill="#fff"/><path d="M86 12 Q88 16 86 20 M88 10 Q91 16 88 22" stroke="#fff" stroke-width="1" fill="none"/>
<rect x="99" y="11" width="9" height="12" fill="none" stroke="#fff" stroke-width="1.5"/><rect x="102" y="9" width="9" height="12" fill="#0c1016" stroke="#fff" stroke-width="1.5"/><path d="M108 13 H113 M108 17 H113 M110 21 V25" stroke="#fff" stroke-width="1.5"/>
<rect x="202" y="-3" width="14" height="38" fill="#2a2e35" stroke="#555" stroke-width="1"/>
</svg>
<div class="a t" style="left:1270px;top:734px;width:80px;text-align:center;font-size:12px;line-height:15px;color:#fff">01:43</div>
<div class="a t" style="left:1270px;top:751px;width:80px;text-align:center;font-size:12px;line-height:15px;color:#fff">14/01/2024</div>
<svg class="a" style="left:0;top:0" width="170" height="25">
<path d="M10 4.5 L19 3 V19 L10 17.5 Z" fill="#1e7145"/><rect x="18.5" y="5" width="7.5" height="12" fill="#fff" stroke="#1e7145" stroke-width="1"/>
<path d="M20 7.5 H25 M20 10 H25 M20 12.5 H25 M20 15 H25 M22 5 V17" stroke="#1e7145" stroke-width="0.8"/>
<path d="M12 7 L16.5 14.5 M16.5 7 L12 14.5" stroke="#fff" stroke-width="1.8"/>
<rect x="40" y="4" width="14" height="14" fill="#8040a8"/><rect x="42" y="6" width="10" height="5" fill="#fff"/><rect x="43.5" y="13" width="7" height="5" fill="#fff"/><rect x="45.5" y="14.5" width="2.5" height="3.5" fill="#8040a8"/>
<path d="M70 9 L75 4.5 M70 9 L75 13 M70.5 9 H77 Q82 9 82 13 Q82 17 77 17" fill="none" stroke="#3c78c0" stroke-width="2.2"/>
<path d="M89 10 H94 L91.5 12.5 Z" fill="#555"/>
<path d="M122 9 L117 4.5 M122 9 L117 13 M121.5 9 H115 Q110 9 110 13 Q110 17 115 17" fill="none" stroke="#b5b5b5" stroke-width="2.2"/>
<path d="M129 10 H134 L131.5 12.5 Z" fill="#bbb"/>
<path d="M148 9.5 H153" stroke="#555" stroke-width="1"/><path d="M147.5 12 H153.5 L150.5 15 Z" fill="#555"/>
</svg>
<svg class="a" style="left:1220px;top:0" width="146" height="50">
<text x="14.5" y="16" font-family="Liberation Sans" font-weight="bold" font-size="13" fill="#666" text-anchor="middle">?</text>
<rect x="37.5" y="6.5" width="12" height="9.5" fill="none" stroke="#666" stroke-width="1"/><path d="M37.5 8.5 H49.5" stroke="#666"/><path d="M43.5 15 V10.5 M41.5 12.5 L43.5 10.5 L45.5 12.5" fill="none" stroke="#666" stroke-width="1"/>
<rect x="68" y="12" width="9" height="2" fill="#666"/>
<rect x="97.5" y="9.5" width="7" height="6" fill="none" stroke="#666"/><path d="M99.5 9.5 V6.5 H106.5 V13 H104.5" fill="none" stroke="#666"/>
<path d="M127 6.5 L135.5 15 M135.5 6.5 L127 15" stroke="#666" stroke-width="2"/>
<rect x="122" y="25" width="24" height="24" fill="#aaaaaa"/>
<circle cx="134" cy="33.5" r="5" fill="#fff"/><path d="M125 49 Q125 40 131 39 L134 41 L137 39 Q143 40 143 49 Z" fill="#fff"/>
</svg>
<div class="a" style="left:0px;top:49px;width:63px;height:1px;background:#d4d4d4"></div>
<div class="a" style="left:176px;top:49px;width:1190px;height:1px;background:#d4d4d4"></div>
<svg class="a" style="left:0;top:50px" width="110" height="90">
<rect x="23" y="11" width="24" height="25" rx="2" fill="#ecc57a"/><rect x="28" y="9" width="14" height="4" rx="1" fill="#7a7a7a"/><rect x="33" y="7" width="4" height="3" rx="1" fill="#7a7a7a"/>
<path d="M37.5 19.5 H46 L50.5 24 V37.5 H37.5 Z" fill="#fff" stroke="#6d6d6d" stroke-width="1"/><path d="M46 19.5 V24 H50.5" fill="none" stroke="#6d6d6d"/>
<path d="M32 62 H38 L35 65 Z" fill="#666"/>
<path d="M63 7 L70 16 M71 7 L64 16" stroke="#555" stroke-width="1.4"/><circle cx="63" cy="19" r="2.6" fill="none" stroke="#3c78c0" stroke-width="1.3"/><circle cx="71" cy="19" r="2.6" fill="none" stroke="#3c78c0" stroke-width="1.3"/>
<path d="M59.5 30.5 H65 L67 32.5 V41.5 H59.5 Z" fill="#fff" stroke="#555"/><path d="M64.5 35.5 H70.5 L73.5 38.5 V45.5 H64.5 Z" fill="#fff" stroke="#555"/><path d="M61 34 H64 M61 36.5 H64 M66 40 H72 M66 42.5 H72" stroke="#3c78c0" stroke-width="0.9"/>
<path d="M81 37 H86 L83.5 39.5 Z" fill="#666"/>
<path d="M67 59 L73 53 L76 56 L70 62 Z" fill="#777"/><path d="M59 62 L66 58 L70 62 L64 68 Z" fill="#ecc57a"/>
<path d="M94.5 87.5 V81.5 H100.5" fill="none" stroke="#888"/><path d="M96.0 83 L99.5 86.5" stroke="#888" stroke-width="1.2"/><path d="M101.0 88 V84 L97.0 88 Z" fill="#888"/>
</svg>
<div class="a t" style="left:21px;top:92px;font-size:12px;line-height:15px;color:#444;font-size:12px">Colar</div>
<div class="a" style="left:110px;top:61px;width:110px;height:22px;border:1px solid #ababab;box-sizing:border-box;background:#fff"></div>
<div class="a" style="left:219px;top:61px;width:45px;height:22px;border:1px solid #ababab;box-sizing:border-box;background:#fff"></div>
<div class="a t" style="left:113px;top:65px;font-size:12.5px;line-height:14px;color:#222">Calibri</div>
<div class="a t" style="left:123px;top:65px;"></div>
<div class="a t" style="left:222px;top:65px;font-size:12.5px;line-height:14px;color:#222">11</div>
<svg class="a" style="left:100px;top:50px" width="215" height="90">
<path d="M110 22 H115 L112.5 24.5 Z" fill="#444"/><path d="M153 22 H158 L155.5 24.5 Z" fill="#444"/>
<text x="175" y="28" font-family="Liberation Sans" font-size="15" fill="#aaa" text-anchor="middle">A</text><path d="M180 17 L182.5 14.5 L185 17 Z" fill="#aaa"/>
<text x="197.5" y="28" font-family="Liberation Sans" font-size="12" fill="#aaa" text-anchor="middle">A</text><path d="M202 15 H207 L204.5 17.5 Z" fill="#aaa"/>
<text x="21" y="58" font-family="Liberation Sans" font-weight="bold" font-size="13" fill="#aaa" text-anchor="middle">N</text>
<text x="42" y="58" font-family="Liberation Serif" font-style="italic" font-size="14" fill="#aaa" text-anchor="middle">I</text>
<text x="65" y="58" font-family="Liberation Sans" font-weight="bold" font-size="13" fill="#aaa" text-anchor="middle">S</text><rect x="61" y="60" width="8" height="1.2" fill="#aaa"/>
<path d="M79 53 H84 L81.5 55.5 Z" fill="#bbb"/>
<path d="M92.5 42 V64" stroke="#e1e1e1"/>
<rect x="101.5" y="46.5" width="12" height="12" fill="none" stroke="#c8c8c8" stroke-dasharray="1 1"/><path d="M107.5 46.5 V58.5 M101.5 52.5 H113.5" stroke="#c8c8c8" stroke-dasharray="1 1"/><rect x="101" y="58" width="13" height="1.5" fill="#bbb"/>
<path d="M122 53 H127 L124.5 55.5 Z" fill="#bbb"/>
<path d="M135.5 42 V64" stroke="#e1e1e1"/>
<path d="M146 48 L152 44 L157 50 L151 55 Z" fill="none" stroke="#aaa" stroke-width="1.2"/><path d="M150 41 V49" stroke="#aaa"/><rect x="143" y="57" width="16" height="3.5" fill="#e3dde3"/>
<path d="M165 53 H170 L167.5 55.5 Z" fill="#bbb"/>
<text x="185" y="60" font-family="Liberation Sans" font-size="17" fill="#aaa" text-anchor="middle">A</text>
<path d="M199 53 H204 L201.5 55.5 Z" fill="#bbb"/>
<path d="M201.5 87.5 V81.5 H207.5" fill="none" stroke="#888"/><path d="M203.0 83 L206.5 86.5" stroke="#888" stroke-width="1.2"/><path d="M208.0 88 V84 L204.0 88 Z" fill="#888"/>
</svg>
<svg class="a" style="left:315px;top:50px" width="340" height="90">
<g stroke="#aaa" stroke-width="1"><path d="M6 14.5 H20 M6 17.5 H20 M6 20.5 H20"/>
<path d="M28 18.5 H42 M28 21.5 H42 M28 24.5 H42"/>
<path d="M50 23.5 H64 M50 26.5 H64 M50 29.5 H64"/>
<path d="M5 47.5 H20 M5 50.5 H16 M5 53.5 H20 M5 56.5 H16"/>
<path d="M28 47.5 H43 M30 50.5 H41 M28 53.5 H43 M30 56.5 H41"/>
<path d="M50 47.5 H65 M54 50.5 H65 M50 53.5 H65 M54 56.5 H65"/>
<path d="M80 47.5 H96 M87 50.5 H96 M87 53.5 H96 M80 56.5 H96 M80 52 H86 M80 52 L83 49.5 M80 52 L83 54.5"/>
<path d="M102 47.5 H118 M109 50.5 H118 M109 53.5 H118 M102 56.5 H118 M102 52 H108 M108 52 L105 49.5 M108 52 L105 54.5"/>
<path d="M72.5 10 V33 M72.5 42 V64" stroke="#e1e1e1"/>
<path d="M125.5 10 V64" stroke="#e1e1e1"/>
</g>
<text x="80" y="25" font-family="Liberation Sans" font-size="10" fill="#aaa" transform="rotate(-40 86 22)">ab</text><path d="M84 29 L96 18 M96 18 H91.5 M96 18 V22.5" stroke="#aaa" stroke-width="1.2" fill="none"/>
<path d="M101 20 H106 L103.5 22.5 Z" fill="#bbb"/>
<g fill="none" stroke="#aaa" stroke-width="1"><rect x="133.5" y="14.5" width="8" height="4"/><path d="M133.5 21.5 H146 M133.5 24.5 H141 M133.5 27.5 H141 M146 21.5 Q150 21.5 150 25 Q150 28 146 28 M146 28 L148 26 M146 28 L148 30"/>
<rect x="133.5" y="45.5" width="15" height="15"/><path d="M133.5 49.5 H148.5 M133.5 56.5 H148.5 M137 53 H145 M137 53 L139 51.5 M137 53 L139 54.5 M145 53 L143 51.5 M145 53 L143 54.5"/></g>
<path d="M270 52 H275 L272.5 54.5 Z" fill="#bbb"/>
<path d="M326.5 87.5 V81.5 H332.5" fill="none" stroke="#888"/><path d="M328.0 83 L331.5 86.5" stroke="#888" stroke-width="1.2"/><path d="M333.0 88 V84 L329.0 88 Z" fill="#888"/>
</svg>
<div class="a t" style="left:467px;top:66px;font-size:12.1px;line-height:15px;color:#a6a6a6">Quebrar Texto Automaticamente</div>
<div class="a t" style="left:467px;top:97px;font-size:11.9px;line-height:15px;color:#a6a6a6">Mesclar e Centralizar</div>
<div class="a" style="left:657px;top:61px;width:131px;height:23px;border:1px solid #d4d4d4;box-sizing:border-box;background:#fff"></div>
<svg class="a" style="left:650px;top:50px" width="145" height="90">
<path d="M127 22 H132 L129.5 24.5 Z" fill="#bbb"/>
<rect x="10" y="45" width="15" height="9" fill="#c8c8c8"/><circle cx="17.5" cy="49.5" r="3" fill="#fff"/><ellipse cx="21" cy="57" rx="5" ry="2" fill="#d8d8d8"/><ellipse cx="21" cy="60" rx="5" ry="2" fill="#d8d8d8"/>
<path d="M32 52 H37 L34.5 54.5 Z" fill="#555"/>
<text x="52" y="60" font-family="Liberation Sans" font-size="15" fill="#aaa" text-anchor="middle">%</text>
<text x="74" y="56" font-family="Liberation Sans" font-size="9.5" fill="#999" text-anchor="middle">000</text>
<path d="M89.5 42 V64" stroke="#e1e1e1"/>
<text x="108" y="51" font-family="Liberation Sans" font-size="9.5" fill="#aaa">0</text><text x="100" y="60" font-family="Liberation Sans" font-size="9.5" fill="#aaa">,00</text><path d="M97.5 48 H105 M97.5 48 L100 45.5 M97.5 48 L100 50.5" stroke="#aaa" fill="none" stroke-width="1.1"/>
<text x="122" y="51" font-family="Liberation Sans" font-size="9.5" fill="#aaa">,00</text><text x="127" y="60" font-family="Liberation Sans" font-size="9.5" fill="#aaa">,0</text><path d="M119 56.5 H126.5 M126.5 56.5 L124 54 M126.5 56.5 L124 59" stroke="#aaa" fill="none" stroke-width="1.1"/>
<path d="M132.5 87.5 V81.5 H138.5" fill="none" stroke="#888"/><path d="M134.0 83 L137.5 86.5" stroke="#888" stroke-width="1.2"/><path d="M139.0 88 V84 L135.0 88 Z" fill="#888"/>
</svg>
<svg class="a" style="left:795px;top:50px" width="230" height="50">
<g fill="#f2eef2" stroke="#b8b8b8" stroke-width="1"><rect x="26.5" y="8.5" width="28" height="22"/></g>
<path d="M26.5 14 H54.5 M26.5 19.5 H54.5 M26.5 25 H54.5 M33.5 8.5 V30.5 M40.5 8.5 V30.5 M47.5 8.5 V30.5" stroke="#b8b8b8"/>
<rect x="34" y="9" width="6" height="5" fill="#9c9c9c"/><rect x="34" y="14" width="13" height="5" fill="#9c9c9c"/><rect x="34" y="19.5" width="6" height="5" fill="#9c9c9c"/>
<rect x="41.5" y="23.5" width="14" height="13" fill="#f8f8f8" stroke="#9c9c9c"/><text x="48.5" y="34" font-family="Liberation Sans" font-size="11" fill="#777" text-anchor="middle">≠</text>
<g fill="#f2eef2" stroke="#b8b8b8"><rect x="109.5" y="10.5" width="26" height="20"/></g>
<path d="M109.5 15.5 H135.5 M109.5 20.5 H135.5 M109.5 25.5 H135.5 M116 10.5 V30.5 M122.5 10.5 V30.5 M129 10.5 V30.5" stroke="#b8b8b8"/>
<rect x="110" y="16" width="25" height="14" fill="#d4d4d4" opacity="0.6"/>
<path d="M139 18 L125 32 L121 38 L127 35 L141 21 Z" fill="#aaa"/>
<g fill="#f2eef2" stroke="#b8b8b8"><rect x="179.5" y="10.5" width="26" height="20"/></g>
<path d="M179.5 15.5 H205.5 M184.5 10.5 V30.5" stroke="#b8b8b8"/><rect x="185" y="16" width="20" height="14" fill="#d4d4d4"/>
<path d="M209 18 L195 32 L191 38 L197 35 L211 21 Z" fill="#aaa"/>
</svg>
<div class="a t" style="left:804px;top:92px;font-size:12px;line-height:15px;color:#a6a6a6;">Formatação</div>
<div class="a t" style="left:799px;top:108px;font-size:12px;line-height:15px;color:#a6a6a6;">Condicional</div>
<div class="a t" style="left:876px;top:92px;font-size:12px;line-height:15px;color:#a6a6a6;">Formatar como</div>
<div class="a t" style="left:897px;top:108px;font-size:12px;line-height:15px;color:#a6a6a6;">Tabela</div>
<div class="a t" style="left:963px;top:92px;font-size:12px;line-height:15px;color:#a6a6a6;">Estilos de</div>
<div class="a t" style="left:967px;top:108px;font-size:12px;line-height:15px;color:#a6a6a6;">Célula</div>
<svg class="a" style="left:860px;top:110px" width="160" height="10">
<path d="M6 2 H12 L9 5 Z" fill="#bbb"/><path d="M74 2 H80 L77 5 Z" fill="#bbb"/><path d="M144 2 H150 L147 5 Z" fill="#bbb"/></svg>
<svg class="a" style="left:1025px;top:50px" width="140" height="70">
<g fill="#fff" stroke="#aaa"><rect x="7.5" y="8.5" width="13" height="5"/><path d="M7.5 8.5 H20.5 M14 8.5 V13.5"/><rect x="21.5" y="15.5" width="13" height="5" fill="#d8d8d8"/><rect x="7.5" y="24.5" width="13" height="11"/><path d="M7.5 30 H20.5 M14 24.5 V35.5"/><path d="M11 18 H19 M11 18 L13 16 M11 18 L13 20"/></g>
<g fill="#fff" stroke="#aaa"><rect x="48.5" y="8.5" width="13" height="5"/><path d="M55 8.5 V13.5"/><rect x="48.5" y="24.5" width="13" height="11"/><path d="M48.5 30 H61.5 M55 24.5 V35.5"/><rect x="51.5" y="15.5" width="13" height="5" fill="#d8d8d8"/><path d="M62 12 L76 26 M76 12 L62 26" stroke-width="1.5"/></g>
<path d="M95 8 H119 M95 8 L98 5.5 M95 8 L98 10.5 M119 8 L116 5.5 M119 8 L116 10.5 M94.5 5 V11 M119.5 5 V11" stroke="#2f6fb5" fill="none"/>
<g fill="#fff" stroke="#7a7a7a"><rect x="94.5" y="13.5" width="28" height="22"/><path d="M94.5 20.5 H122.5 M94.5 28 H122.5 M101.5 13.5 V35.5 M108.5 13.5 V35.5 M115.5 13.5 V35.5"/><path d="M96 35.5 L98 39 H104 L105 35.5 M106 35.5 L108 39 H114 L115 35.5" fill="none"/></g>
<rect x="102" y="20" width="6" height="8.5" fill="#2f6fb5"/>
<path d="M17 62 H22 L19.5 64.5 Z" fill="#555"/><path d="M58 62 H63 L60.5 64.5 Z" fill="#555"/><path d="M106 62 H111 L108.5 64.5 Z" fill="#555"/>
</svg>
<div class="a t" style="left:1028px;top:92px;font-size:12px;line-height:15px;color:#444;">Inserir</div>
<div class="a t" style="left:1070px;top:92px;font-size:12px;line-height:15px;color:#444;">Excluir</div>
<div class="a t" style="left:1110px;top:92px;font-size:12px;line-height:15px;color:#444;">Formatar</div>
<svg class="a" style="left:1168px;top:50px" width="198" height="90">
<path d="M20 7.5 H7.5 L14 13.5 L7.5 19.5 H20" fill="none" stroke="#999" stroke-width="1.8"/>
<path d="M26 13 H31 L28.5 15.5 Z" fill="#555"/>
<rect x="6.5" y="29.5" width="14" height="14" fill="#fff" stroke="#666"/><rect x="6.5" y="29.5" width="14" height="3" fill="#666"/><path d="M13.5 33 V41 M10 37.5 L13.5 41 L17 37.5" stroke="#2f6fb5" stroke-width="2" fill="none"/>
<path d="M24 36 H29 L26.5 38.5 Z" fill="#555"/>
<path d="M8 62 L15 54 L21 58 L14 66 Z" fill="#e66a7f"/><path d="M6 66 H20" stroke="#777"/>
<path d="M24 60 H29 L26.5 62.5 Z" fill="#555"/>
<text x="55" y="20" font-family="Liberation Sans" font-size="12" fill="#aaa" text-anchor="middle">A</text><text x="55" y="34" font-family="Liberation Sans" font-size="12" fill="#aaa" text-anchor="middle">Z</text>
<path d="M61 20 H79 L72 27 V34 L68 32 V27 Z" fill="#c8c8c8"/>
<path d="M121 10 H124.5 V13 H127 V19 H129 V33 H115 V22 H117 V19 H119 V13 H121 Z" fill="#666"/>
<path d="M134 10 H137.5 V13 H140 V19 H142 V22 H144 V33 H130 V19 H132 V13 H134 Z" fill="#666"/>
<rect x="128" y="19" width="3" height="3" fill="#666"/>
<path d="M116.5 23 V32 M142.5 23 V32" stroke="#fff" stroke-width="0.8"/>
<path d="M178 86 L183 81 L188 86" fill="none" stroke="#555" stroke-width="1.5"/>
</svg>
<div class="a t" style="left:1207px;top:92px;font-size:12px;line-height:15px;color:#a6a6a6;">Classificar</div>
<div class="a t" style="left:1210px;top:108px;font-size:12px;line-height:15px;color:#a6a6a6;">e Filtrar</div>
<div class="a t" style="left:1269px;top:92px;font-size:12px;line-height:15px;color:#444;">Localizar e</div>
<div class="a t" style="left:1265px;top:108px;font-size:12px;line-height:15px;color:#444;">Selecionar</div>
<svg class="a" style="left:1250px;top:110px" width="80" height="10"><path d="M2 2 H8 L5 5 Z" fill="#bbb"/><path d="M73 2 H80 L76.5 5.5 Z" fill="#555"/></svg>
<svg class="a" style="left:90px;top:155px" width="160" height="22">
<path d="M3 9 H10 L6.5 12.5 Z" fill="#666"/>
<rect x="31" y="5" width="2" height="2" fill="#999"/><rect x="31" y="10" width="2" height="2" fill="#999"/><rect x="31" y="15" width="2" height="2" fill="#999"/>
<path d="M61 6 L71 16 M71 6 L61 16" stroke="#bbb" stroke-width="1.3"/>
<path d="M97 11 L101 15 L108 6" fill="none" stroke="#bbb" stroke-width="1.8"/>
<text x="132" y="16" font-family="Liberation Serif" font-style="italic" font-weight="bold" font-size="14" fill="#555">f</text><text x="138" y="16" font-family="Liberation Serif" font-style="italic" font-size="10" fill="#555">x</text>
</svg>
<svg class="a" style="left:0;top:189px" width="25" height="16"><path d="M22 4 V13 H13 Z" fill="#dadada"/></svg>
<svg class="a" style="left:990px;top:206px" width="320" height="240">
<rect x="33" y="0" width="187" height="8" fill="#c8c8c8"/><path d="M33.5 0 V8" stroke="#888"/>
<path d="M10 8 H303" stroke="#444" stroke-width="1"/>
<rect x="10" y="8.5" width="293" height="24.5" fill="#cd6a28"/>
<path d="M10 33 H303" stroke="#333" stroke-width="1"/>
<path d="M10.5 6 V35 M303.5 6 V35" stroke="#333" stroke-width="1"/>
<rect x="220" y="0" width="6" height="16" fill="#fff" stroke="#888" stroke-width="0.8"/>
<path d="M220 15 Q220 23 230 23 H238 V17 H232 Q226 17 226 14 Z" fill="#fff" stroke="#888" stroke-width="0.8"/>
<rect x="233" y="17" width="5" height="6" fill="#ddd" stroke="#888" stroke-width="0.6"/>
<rect x="258" y="17" width="45" height="6" fill="#fff" stroke="#666" stroke-width="0.6"/>
<rect x="236.5" y="7.5" width="21" height="20" fill="#595959" stroke="#333"/>
<rect x="235" y="6.5" width="24" height="2" fill="#333"/>
<path d="M270.5 0 L283 20" stroke="#333" stroke-width="1"/>
<path d="M220 0 V8 M226 0 V15" stroke="#888" stroke-width="0.8"/>
</svg>
<div class="a t" style="left:1196px;top:240px;width:80px;text-align:center;font-size:13px;line-height:15px;color:#000">Caixa</div>
<div class="a t" style="left:1196px;top:254px;width:80px;text-align:center;font-size:13px;line-height:15px;color:#000">Coletora</div>
<svg class="a" style="left:1000px;top:290px" width="260" height="160">
<rect x="66" y="51.5" width="130.5" height="38.5" fill="#00ffff"/>
<path d="M66 51.5 H196.5" stroke="#777" stroke-width="1"/>
<path d="M57 12.5 H66 V90 H196.5 V12.5 H205" fill="none" stroke="#000" stroke-width="2.5"/>
<g stroke="#6e6e6e" stroke-width="1.2" fill="none">
<path d="M17.5 51.5 H51 M17.5 90 H51 M29 51.5 V90"/>
<path d="M212 12.5 H245 M212 90 H245 M234 12.5 V90"/>
<path d="M66 105 V138.5 M196.5 105 V138.5 M66 128 H196.5"/>
</g>
<g stroke="#000" stroke-width="2" fill="none">
<path d="M24 46.5 L34 56.5 M24 85 L34 95"/>
<path d="M229 7.5 L239 17.5 M229 85 L239 95"/>
<path d="M61 133 L71 123 M191.5 133 L201.5 123"/>
</g>
</svg>
<div class="a t" style="left:988px;top:356px;font-weight:bold;font-size:12.5px;line-height:15px;color:#000">7,50</div>
<div class="a t" style="left:1244px;top:336px;font-weight:bold;font-size:12.5px;line-height:15px;color:#000">12,50</div>
<div class="a t" style="left:1116px;top:428px;font-weight:bold;font-size:12.5px;line-height:15px;color:#000">25,00</div>
<svg class="a" style="left:1344px;top:160px" width="14" height="12"><path d="M3 4 L7 8 L11 4" fill="none" stroke="#444" stroke-width="1.5"/></svg>
</body></html>
